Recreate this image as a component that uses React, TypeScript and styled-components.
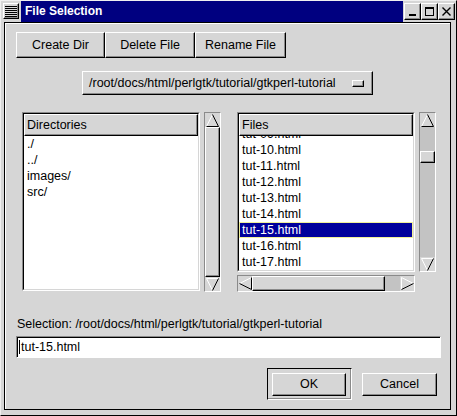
import styled, { createGlobalStyle, css } from "styled-components";

const GRAY = "#d6d6d6";
const TROUGH = "#c3c3c3";

const GlobalStyle = createGlobalStyle`
  html, body {
    margin: 0;
    padding: 0;
    background: ${GRAY};
  }
  body {
    font-family: "Liberation Sans", Arial, sans-serif;
    font-size: 12.5px;
    color: #000;
  }
`;

const raised = css`
  border: 1px solid;
  border-color: #ffffff #000000 #000000 #ffffff;
  box-shadow: inset -1px -1px 0 #8a8a8a;
`;

const Window = styled.div`
  width: 457px;
  height: 416px;
  box-sizing: border-box;
  background: ${GRAY};
  border: 1px solid;
  border-color: #f0f0f0 #000 #000 #f0f0f0;
  display: flex;
  flex-direction: column;
`;

const TitleRow = styled.div`
  display: flex;
  height: 21px;
  flex-shrink: 0;
`;

const IconSlot = styled.div`
  width: 20px;
  padding: 2px 0 0 2px;
  box-sizing: border-box;
`;

const MenuIcon = styled.div`
  width: 16px;
  height: 16px;
  box-sizing: border-box;
  ${raised};
  background: repeating-linear-gradient(
    to bottom,
    #000 0px,
    #000 1px,
    ${GRAY} 1px,
    ${GRAY} 2px
  );
  background-clip: content-box;
  padding: 1px;
`;

const TitleBar = styled.div`
  flex: 1;
  background: #000080;
  color: #fff;
  font-weight: bold;
  font-size: 12px;
  line-height: 21px;
  padding-left: 4px;
`;

const TitleButtons = styled.div`
  display: flex;
  padding: 2px 1px 0 1px;
`;

const TitleButton = styled.div`
  width: 17px;
  height: 17px;
  box-sizing: border-box;
  ${raised};
  display: flex;
  align-items: center;
  justify-content: center;
`;

const Body = styled.div`
  flex: 1;
  margin: 0 5px 5px 3px;
  border: 1px solid #000;
  box-shadow: inset 1px 1px 0 #ffffff;
  padding: 9px 9px 0 11px;
  display: flex;
  flex-direction: column;
`;

const ActionRow = styled.div`
  display: flex;
`;

const Button = styled.div<{ $w: number; $h?: number }>`
  width: ${(p) => p.$w}px;
  height: ${(p) => p.$h ?? 26}px;
  box-sizing: border-box;
  ${raised};
  display: flex;
  align-items: center;
  justify-content: center;
  background: ${GRAY};
`;

const PathRow = styled.div`
  display: flex;
  justify-content: center;
  margin-top: 13px;
  padding-right: 2px;
`;

const OptionMenu = styled.div`
  width: 291px;
  height: 24px;
  box-sizing: border-box;
  ${raised};
  display: flex;
  align-items: center;
  padding: 0 8px 0 6px;
`;

const OptionText = styled.span`
  flex: 1;
  white-space: nowrap;
`;

const OptionIndicator = styled.div`
  width: 12px;
  height: 7px;
  flex-shrink: 0;
  box-sizing: border-box;
  ${raised};
`;

const ListsRow = styled.div`
  display: flex;
  gap: 16px;
  margin-top: 17px;
  padding-left: 6px;
`;

const Pane = styled.div`
  display: flex;
  flex-direction: column;
  gap: 3px;
`;

const PaneTop = styled.div`
  display: flex;
  gap: 4px;
`;

const ListFrame = styled.div<{ $h: number }>`
  width: 178px;
  height: ${(p) => p.$h}px;
  box-sizing: border-box;
  border: 1px solid;
  border-color: #8a8a8a #ffffff #ffffff #8a8a8a;
  display: flex;
`;

const ListInner = styled.div`
  flex: 1;
  border: 1px solid;
  border-color: #000 ${GRAY} ${GRAY} #000;
  background: #fff;
  display: flex;
  flex-direction: column;
  overflow: hidden;
`;

const ListHeader = styled.div`
  height: 22px;
  flex-shrink: 0;
  box-sizing: border-box;
  ${raised};
  background: ${GRAY};
  padding-left: 2px;
  line-height: 20px;
`;

const ListView = styled.div`
  flex: 1;
  overflow: hidden;
`;

const ListRows = styled.div<{ $offset: number }>`
  margin-top: ${(p) => -p.$offset}px;
`;

const Row = styled.div<{ $selected?: boolean }>`
  height: 16px;
  line-height: 14px;
  box-sizing: border-box;
  padding-left: 2px;
  border: 1px solid ${(p) => (p.$selected ? "#f0f09a" : "transparent")};
  background: ${(p) => (p.$selected ? "#00009c" : "transparent")};
  color: ${(p) => (p.$selected ? "#fff" : "#000")};
  white-space: nowrap;
`;

const VScroll = styled.div<{ $h: number }>`
  width: 17px;
  height: ${(p) => p.$h}px;
  box-sizing: border-box;
  border: 1px solid;
  border-color: #8a8a8a #ffffff #ffffff #8a8a8a;
  background: ${TROUGH};
  display: flex;
  flex-direction: column;
`;

const HScroll = styled.div`
  width: 178px;
  height: 17px;
  box-sizing: border-box;
  border: 1px solid;
  border-color: #8a8a8a #ffffff #ffffff #8a8a8a;
  background: ${TROUGH};
  display: flex;
`;

const ArrowBox = styled.div<{ $horizontal?: boolean }>`
  flex-shrink: 0;
  width: ${(p) => (p.$horizontal ? 14 : 15)}px;
  height: ${(p) => (p.$horizontal ? 15 : 14)}px;
  background: ${GRAY};
  display: flex;
  align-items: center;
  justify-content: center;
`;

const Track = styled.div<{ $horizontal?: boolean }>`
  flex: 1;
  display: flex;
  flex-direction: ${(p) => (p.$horizontal ? "row" : "column")};
`;

const Thumb = styled.div<{ $fill?: boolean }>`
  box-sizing: border-box;
  ${raised};
  background: ${GRAY};
  flex: ${(p) => (p.$fill ? 1 : "none")};
`;

const SelectionLabel = styled.div`
  margin-top: 25px;
  padding-left: 1px;
  line-height: 14px;
  white-space: nowrap;
`;

const Entry = styled.div`
  margin-top: 5px;
  height: 22px;
  box-sizing: border-box;
  border: 1px solid;
  border-color: #8a8a8a #ffffff #ffffff #8a8a8a;
  box-shadow: inset 1px 1px 0 #000;
  background: #fff;
  padding-left: 2px;
  line-height: 20px;
  display: flex;
  align-items: center;
`;

const Cursor = styled.span`
  width: 1px;
  height: 14px;
  background: #000;
  margin-right: 1px;
`;

const DialogButtons = styled.div`
  display: flex;
  justify-content: flex-end;
  align-items: center;
  gap: 10px;
  margin-top: 10px;
  padding-right: 4px;
`;

const DefaultFrame = styled.div`
  width: 85px;
  height: 32px;
  box-sizing: border-box;
  border: 1px solid;
  border-color: #000 #ffffff #ffffff #000;
  box-shadow: inset -1px -1px 0 #8a8a8a;
  display: flex;
  align-items: center;
  justify-content: center;
  padding-right: 1px;
`;

type Dir = "up" | "down" | "left" | "right";

const ARROWS: Record<Dir, { fill: string; light: string; dark: string }> = {
  up: {
    fill: "6.5,0.5 12.5,12.5 0.5,12.5",
    light: "M0.5 12.5 L6.5 0.5",
    dark: "M6.5 0.5 L12.5 12.5 L0.5 12.5",
  },
  down: {
    fill: "0.5,0.5 12.5,0.5 6.5,12.5",
    light: "M6.5 12.5 L0.5 0.5 L12.5 0.5",
    dark: "M12.5 0.5 L6.5 12.5",
  },
  left: {
    fill: "0.5,6.5 12.5,0.5 12.5,12.5",
    light: "M12.5 0.5 L0.5 6.5",
    dark: "M0.5 6.5 L12.5 12.5 L12.5 0.5",
  },
  right: {
    fill: "0.5,0.5 12.5,6.5 0.5,12.5",
    light: "M0.5 12.5 L0.5 0.5 L12.5 6.5",
    dark: "M12.5 6.5 L0.5 12.5",
  },
};

function Arrow({ dir }: { dir: Dir }) {
  const a = ARROWS[dir];
  return (
    <svg width="13" height="13" viewBox="0 0 13 13">
      <polygon points={a.fill} fill={GRAY} />
      <path d={a.light} fill="none" stroke="#ffffff" strokeWidth="1" />
      <path d={a.dark} fill="none" stroke="#000000" strokeWidth="1" />
    </svg>
  );
}

const dirs = ["./", "../", "images/", "src/"];
const files = [
  "tut-09.html",
  "tut-10.html",
  "tut-11.html",
  "tut-12.html",
  "tut-13.html",
  "tut-14.html",
  "tut-15.html",
  "tut-16.html",
  "tut-17.html",
];

const PATH = "/root/docs/html/perlgtk/tutorial/gtkperl-tutorial";

export default function App() {
  return (
    <>
      <GlobalStyle />
      <Window>
        <TitleRow>
          <IconSlot>
            <MenuIcon />
          </IconSlot>
          <TitleBar>File Selection</TitleBar>
          <TitleButtons>
            <TitleButton>
              <svg width="13" height="13" viewBox="0 0 13 13">
                <rect x="3" y="9" width="7" height="2" fill="#000" />
              </svg>
            </TitleButton>
            <TitleButton>
              <svg width="13" height="13" viewBox="0 0 13 13">
                <rect x="2.5" y="2.5" width="8" height="8" fill="none" stroke="#000" />
                <rect x="2" y="2" width="9" height="2" fill="#000" />
              </svg>
            </TitleButton>
            <TitleButton>
              <svg width="13" height="13" viewBox="0 0 13 13">
                <path d="M2.5 2.5 L10.5 10.5 M10.5 2.5 L2.5 10.5" stroke="#000" strokeWidth="1.4" />
              </svg>
            </TitleButton>
          </TitleButtons>
        </TitleRow>
        <Body>
          <ActionRow>
            <Button $w={89}>Create Dir</Button>
            <Button $w={90}>Delete File</Button>
            <Button $w={91}>Rename File</Button>
          </ActionRow>
          <PathRow>
            <OptionMenu>
              <OptionText>{PATH}</OptionText>
              <OptionIndicator />
            </OptionMenu>
          </PathRow>
          <ListsRow>
            <PaneTop>
              <ListFrame $h={179}>
                <ListInner>
                  <ListHeader>Directories</ListHeader>
                  <ListView>
                    <ListRows $offset={0}>
                      {dirs.map((d) => (
                        <Row key={d}>{d}</Row>
                      ))}
                    </ListRows>
                  </ListView>
                </ListInner>
              </ListFrame>
              <VScroll $h={180}>
                <ArrowBox>
                  <Arrow dir="up" />
                </ArrowBox>
                <Track>
                  <Thumb $fill />
                </Track>
                <ArrowBox>
                  <Arrow dir="down" />
                </ArrowBox>
              </VScroll>
            </PaneTop>
            <Pane>
              <PaneTop>
                <ListFrame $h={160}>
                  <ListInner>
                    <ListHeader>Files</ListHeader>
                    <ListView>
                      <ListRows $offset={10}>
                        {files.map((f) => (
                          <Row key={f} $selected={f === "tut-15.html"}>
                            {f}
                          </Row>
                        ))}
                      </ListRows>
                    </ListView>
                  </ListInner>
                </ListFrame>
                <VScroll $h={160}>
                  <ArrowBox>
                    <Arrow dir="up" />
                  </ArrowBox>
                  <Track>
                    <Thumb style={{ marginTop: 24, height: 12 }} />
                  </Track>
                  <ArrowBox>
                    <Arrow dir="down" />
                  </ArrowBox>
                </VScroll>
              </PaneTop>
              <HScroll>
                <ArrowBox $horizontal>
                  <Arrow dir="left" />
                </ArrowBox>
                <Track $horizontal>
                  <Thumb style={{ width: 133 }} />
                </Track>
                <ArrowBox $horizontal>
                  <Arrow dir="right" />
                </ArrowBox>
              </HScroll>
            </Pane>
          </ListsRow>
          <SelectionLabel>Selection: {PATH}</SelectionLabel>
          <Entry>
            <Cursor />
            tut-15.html
          </Entry>
          <DialogButtons>
            <DefaultFrame>
              <Button $w={74} $h={23}>
                OK
              </Button>
            </DefaultFrame>
            <Button $w={75} $h={23}>
              Cancel
            </Button>
          </DialogButtons>
        </Body>
      </Window>
    </>
  );
}
